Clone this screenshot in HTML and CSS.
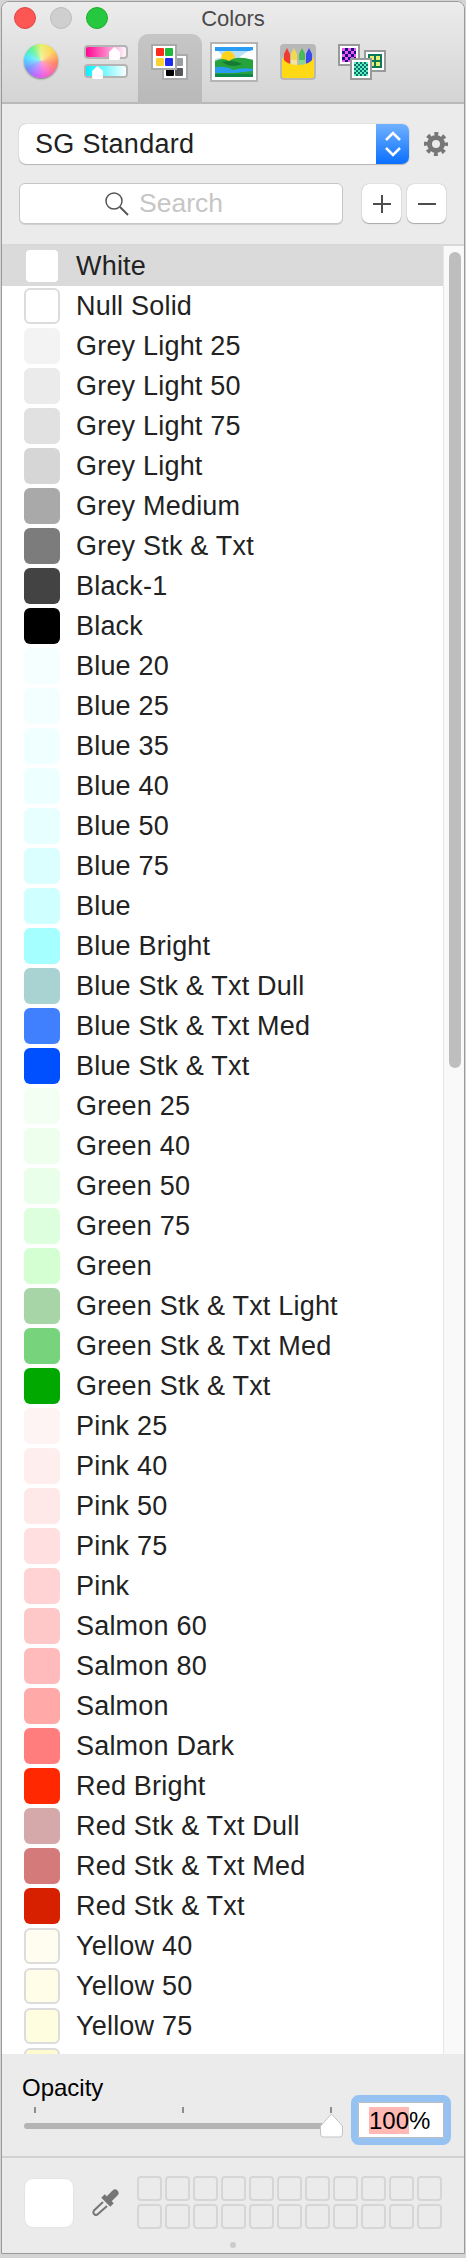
FILE: index.html
```html
<!DOCTYPE html>
<html lang="en">
    <head>
        <meta charset="UTF-8">
        <meta name="viewport" content="width=device-width, initial-scale=1.0">
        <title>Colors</title>
        <link rel="stylesheet" href="styles.css">
    </head>
    <body>
        <div class="window">
            <header class="toolbar">
                <div class="titlebar">
                    <div class="lights">
                        <span class="light red"></span>
                        <span class="light grey"></span>
                        <span class="light green"></span>
                    </div>
                    <div class="title">Colors</div>
                    <div></div>
                </div>
                <div class="tabs">
                    <div class="tab"><span class="wheel"></span></div>
                    <div class="tab">
                        <svg width="64" height="68" viewBox="74 34 64 68">
                            <defs>
                                <linearGradient id="pinkbar"><stop offset="0" stop-color="#ff0090"/><stop offset="1" stop-color="#fff"/></linearGradient>
                                <linearGradient id="cyanbar"><stop offset="0" stop-color="#00f0ff"/><stop offset="1" stop-color="#fff"/></linearGradient>
                            </defs>
                            <rect x="85" y="46" width="42" height="12" rx="3" fill="url(#pinkbar)" stroke="#b4b4b4" stroke-width="2"/>
                            <rect x="85" y="65" width="42" height="12" rx="3" fill="url(#cyanbar)" stroke="#b4b4b4" stroke-width="2"/>
                            <path d="M109 52 L114.500 47 L120 52 V58 Q120 60 118 60 H111 Q109 60 109 58 Z" fill="#fff"/>
                            <path d="M92 71 L97.500 66 L103 71 V77 Q103 79 101 79 H94 Q92 79 92 77 Z" fill="#fff"/>
                        </svg>
                    </div>
                    <div class="tab active">
                        <svg width="64" height="68" viewBox="138 34 64 68">
                            <rect x="163" y="55" width="24" height="24" fill="#fff" stroke="#aaa" stroke-width="2"/>
                            <rect x="175" y="58" width="8" height="8" rx="1" fill="#9b9ea1"/>
                            <rect x="166" y="68" width="8" height="8" rx="1" fill="#000"/>
                            <rect x="175" y="68" width="8" height="8" rx="1" fill="#55575a"/>
                            <rect x="152" y="45" width="24" height="24" fill="#fff" stroke="#aaa" stroke-width="2"/>
                            <rect x="156" y="48" width="8" height="8" rx="1" fill="#fb2a1c"/>
                            <rect x="165" y="48" width="8" height="8" rx="1" fill="#1cb93a"/>
                            <rect x="156" y="58" width="8" height="8" rx="1" fill="#fdd034"/>
                            <rect x="165" y="58" width="8" height="8" rx="1" fill="#1f2cf0"/>
                        </svg>
                    </div>
                    <div class="tab">
                        <svg width="64" height="68" viewBox="202 34 64 68">
                            <rect x="211" y="43" width="46" height="38" fill="#fff" stroke="#b4b4b4" stroke-width="2"/>
                            <rect x="215" y="47" width="38" height="30" fill="#2a9cf4"/>
                            <rect x="215" y="51" width="38" height="12" fill="#b9e0f5"/>
                            <path d="M215 51 h3 q3 3 5 6 l-8 2 Z M253 50 v9 h-15 q6 -7 15 -9 Z" fill="#fff"/>
                            <circle cx="228" cy="58" r="7" fill="#ffd21e"/>
                            <path d="M215 61 q8 -4 14 0 q8 -6 24 -1 v17 h-38 Z" fill="#27a33c"/>
                            <path d="M222 62 q12 -3 20 2 q-10 5 -20 -2 Z" fill="#157a35"/>
                            <path d="M215 67 q12 -1 18 3 q10 -3 20 -1 v2 q-10 1 -18 2 q-10 0 -20 0 Z" fill="#2a9cf4"/>
                            <rect x="215" y="74" width="38" height="3" fill="#0d8a4a"/>
                        </svg>
                    </div>
                    <div class="tab">
                        <svg width="64" height="68" viewBox="266 34 64 68">
                            <rect x="280" y="44" width="36" height="36" rx="4" fill="#b8b8b8"/>
                            <path d="M284 66 V54 L287 48 L290 54 V66 Z" fill="#ee3a30"/>
                            <path d="M291 66 V54 L294 48 L297 54 V66 Z" fill="#f5d94a"/>
                            <path d="M299 66 V54 L302 48 L305 54 V66 Z" fill="#47bb56"/>
                            <path d="M306 66 V54 L309 48 L312 54 V66 Z" fill="#3a48ee"/>
                            <rect x="291" y="60" width="6" height="11" fill="#f5e49a"/>
                            <rect x="299" y="60" width="6" height="11" fill="#86d68f"/>
                            <path d="M282 57 Q286 65 298 65 Q310 65 314 57 V76 Q314 78 312 78 H284 Q282 78 282 76 Z" fill="#ffd816"/>
                        </svg>
                    </div>
                    <div class="tab">
                        <svg width="64" height="68" viewBox="330 34 64 68">
                            <defs>
                                <pattern id="navycheck" width="6" height="6" patternUnits="userSpaceOnUse">
                                    <rect width="6" height="6" fill="#14147e"/>
                                    <rect width="3" height="3" fill="#f455f0"/>
                                    <rect x="3" y="3" width="3" height="3" fill="#f455f0"/>
                                </pattern>
                                <pattern id="tealcheck" width="4" height="4" patternUnits="userSpaceOnUse">
                                    <rect width="4" height="4" fill="#0f6f6a"/>
                                    <rect width="2" height="2" fill="#5cf0c0"/>
                                    <rect x="2" y="2" width="2" height="2" fill="#5cf0c0"/>
                                </pattern>
                            </defs>
                            <rect x="365" y="51" width="20" height="20" fill="#fff" stroke="#999" stroke-width="2"/>
                            <rect x="368" y="54" width="14" height="14" fill="#0c7a58"/>
                            <rect x="370" y="56" width="4" height="4" fill="#ecec70"/>
                            <rect x="376" y="56" width="4" height="4" fill="#ecec70"/>
                            <rect x="370" y="62" width="4" height="4" fill="#ecec70"/>
                            <rect x="376" y="62" width="4" height="4" fill="#ecec70"/>
                            <rect x="339" y="45" width="20" height="20" fill="#fff" stroke="#999" stroke-width="2"/>
                            <rect x="342" y="48" width="14" height="14" fill="url(#navycheck)"/>
                            <rect x="351" y="59" width="20" height="20" fill="#fff" stroke="#999" stroke-width="2"/>
                            <rect x="354" y="62" width="14" height="14" fill="url(#tealcheck)"/>
                        </svg>
                    </div>
                </div>
            </header>

            <section class="controls">
                <div class="control-row">
                    <div class="dropdown">
                        <span class="dropdown-label">SG Standard</span>
                        <span class="stepper">
                            <svg width="20" height="32" viewBox="0 0 20 32">
                                <path d="M3 12 L10 5 L17 12 M3 20 L10 27 L17 20" fill="none" stroke="#fff" stroke-width="2.500"/>
                            </svg>
                        </span>
                    </div>
                    <svg class="gear" width="24" height="24" viewBox="0 0 24 24">
                        <circle cx="12" cy="12" r="6.500" fill="none" stroke="#767676" stroke-width="5"/>
                        <circle cx="12" cy="12" r="10" fill="none" stroke="#767676" stroke-width="4" stroke-dasharray="3.850 4" stroke-dashoffset="1.900"/>
                    </svg>
                </div>
                <div class="control-row search-row">
                    <div class="search">
                        <svg width="24" height="24" viewBox="0 0 24 24">
                            <circle cx="9" cy="9" r="8" fill="none" stroke="#555" stroke-width="1.500"/>
                            <path d="M15 15 L23 23" stroke="#555" stroke-width="2"/>
                        </svg>
                        <span class="search-text">Search</span>
                    </div>
                    <div class="square-btn">
                        <svg width="20" height="20" viewBox="0 0 20 20"><path d="M1 10 H19 M10 1 V19" stroke="#4d4d4d" stroke-width="2"/></svg>
                    </div>
                    <div class="square-btn">
                        <svg width="20" height="20" viewBox="0 0 20 20"><path d="M1 10 H19" stroke="#4d4d4d" stroke-width="2"/></svg>
                    </div>
                </div>
            </section>

            <div class="list-wrap">
                <div class="list">
                    <div class="row selected"><span class="swatch" style="background:#fff"></span>White</div>
                    <div class="row"><span class="swatch outlined" style="background:#fff"></span>Null Solid</div>
                    <div class="row"><span class="swatch" style="background:#f3f3f3"></span>Grey Light 25</div>
                    <div class="row"><span class="swatch" style="background:#ebebeb"></span>Grey Light 50</div>
                    <div class="row"><span class="swatch" style="background:#e1e1e1"></span>Grey Light 75</div>
                    <div class="row"><span class="swatch" style="background:#d6d6d6"></span>Grey Light</div>
                    <div class="row"><span class="swatch" style="background:#a9a9a9"></span>Grey Medium</div>
                    <div class="row"><span class="swatch" style="background:#7c7c7c"></span>Grey Stk &amp; Txt</div>
                    <div class="row"><span class="swatch" style="background:#434343"></span>Black-1</div>
                    <div class="row"><span class="swatch" style="background:#000"></span>Black</div>
                    <div class="row"><span class="swatch" style="background:#f5ffff"></span>Blue 20</div>
                    <div class="row"><span class="swatch" style="background:#f3ffff"></span>Blue 25</div>
                    <div class="row"><span class="swatch" style="background:#f0ffff"></span>Blue 35</div>
                    <div class="row"><span class="swatch" style="background:#edffff"></span>Blue 40</div>
                    <div class="row"><span class="swatch" style="background:#e8ffff"></span>Blue 50</div>
                    <div class="row"><span class="swatch" style="background:#dbffff"></span>Blue 75</div>
                    <div class="row"><span class="swatch" style="background:#d0ffff"></span>Blue</div>
                    <div class="row"><span class="swatch" style="background:#a5ffff"></span>Blue Bright</div>
                    <div class="row"><span class="swatch" style="background:#a9d3d3"></span>Blue Stk &amp; Txt Dull</div>
                    <div class="row"><span class="swatch" style="background:#4080ff"></span>Blue Stk &amp; Txt Med</div>
                    <div class="row"><span class="swatch" style="background:#0050ff"></span>Blue Stk &amp; Txt</div>
                    <div class="row"><span class="swatch" style="background:#f4fff4"></span>Green 25</div>
                    <div class="row"><span class="swatch" style="background:#eeffee"></span>Green 40</div>
                    <div class="row"><span class="swatch" style="background:#e9ffe9"></span>Green 50</div>
                    <div class="row"><span class="swatch" style="background:#deffde"></span>Green 75</div>
                    <div class="row"><span class="swatch" style="background:#d3ffd3"></span>Green</div>
                    <div class="row"><span class="swatch" style="background:#a8d5a8"></span>Green Stk &amp; Txt Light</div>
                    <div class="row"><span class="swatch" style="background:#77d47d"></span>Green Stk &amp; Txt Med</div>
                    <div class="row"><span class="swatch" style="background:#00a800"></span>Green Stk &amp; Txt</div>
                    <div class="row"><span class="swatch" style="background:#fff4f4"></span>Pink 25</div>
                    <div class="row"><span class="swatch" style="background:#ffeeee"></span>Pink 40</div>
                    <div class="row"><span class="swatch" style="background:#ffe8e8"></span>Pink 50</div>
                    <div class="row"><span class="swatch" style="background:#ffdfdf"></span>Pink 75</div>
                    <div class="row"><span class="swatch" style="background:#ffd3d3"></span>Pink</div>
                    <div class="row"><span class="swatch" style="background:#ffc8c8"></span>Salmon 60</div>
                    <div class="row"><span class="swatch" style="background:#ffbbbb"></span>Salmon 80</div>
                    <div class="row"><span class="swatch" style="background:#ffa9a9"></span>Salmon</div>
                    <div class="row"><span class="swatch" style="background:#ff7d7d"></span>Salmon Dark</div>
                    <div class="row"><span class="swatch" style="background:#ff2800"></span>Red Bright</div>
                    <div class="row"><span class="swatch" style="background:#d5a9a9"></span>Red Stk &amp; Txt Dull</div>
                    <div class="row"><span class="swatch" style="background:#d47a7a"></span>Red Stk &amp; Txt Med</div>
                    <div class="row"><span class="swatch" style="background:#d62000"></span>Red Stk &amp; Txt</div>
                    <div class="row"><span class="swatch outlined" style="background:#fffdef"></span>Yellow 40</div>
                    <div class="row"><span class="swatch outlined" style="background:#fffde8"></span>Yellow 50</div>
                    <div class="row"><span class="swatch outlined" style="background:#fffde0"></span>Yellow 75</div>
                    <div class="row"><span class="swatch outlined" style="background:#fffbd0"></span></div>
                </div>
                <div class="scrollbar"><div class="thumb"></div></div>
            </div>

            <section class="opacity">
                <div class="opacity-left">
                    <div class="opacity-label">Opacity</div>
                    <div class="ticks"><span></span><span></span><span></span></div>
                    <div class="slider">
                        <div class="track"></div>
                        <svg class="knob" width="23" height="25" viewBox="0 0 23 25">
                            <path d="M.5 13 L11.500 1 L22.500 13 V21 Q22.500 24 19.500 24 H3.500 Q.5 24 .5 21 Z" fill="#fff" stroke="#c4c4c4"/>
                        </svg>
                    </div>
                </div>
                <div class="percent"><span class="percent-selected">100</span>%</div>
            </section>

            <footer class="favorites">
                <div class="favorites-row">
                    <div class="current"></div>
                    <svg class="dropper" width="28" height="28" viewBox="0 0 28 28">
                        <path d="M23 5 L18 10" stroke="#767676" stroke-width="7" stroke-linecap="round"/>
                        <path d="M11 8 L20 17" stroke="#767676" stroke-width="5"/>
                        <path d="M11 14 L2 22.500 Q0.500 25 2.500 26.500 Q4.500 27.500 6 26 L15 18" fill="none" stroke="#767676" stroke-width="2"/>
                    </svg>
                    <div class="wells">
                        <span></span><span></span><span></span><span></span><span></span><span></span><span></span><span></span><span></span><span></span><span></span>
                        <span></span><span></span><span></span><span></span><span></span><span></span><span></span><span></span><span></span><span></span><span></span>
                    </div>
                </div>
                <div class="grip"></div>
            </footer>
        </div>
    </body>
</html>
```

FILE: styles.css
```css
body {
    margin: 0;
    background-color: #d4d4d4;
    font-family: "Liberation Sans", Arial, sans-serif;
    color: #222;
}

.window {
    width: 462px;
    margin: 1px 1px 2px 1px;
    border: 1px solid #9a9a9a;
    border-radius: 8px 8px 0 0;
    background-color: #ebebeb;
    overflow: hidden;
}

/* title bar and tabs */
.toolbar {
    height: 100px;
    background: linear-gradient(#ececec, #d4d4d4);
    border-bottom: 2px solid #b9b9b9;
}

.titlebar {
    display: grid;
    grid-template-columns: 1fr auto 1fr;
    height: 32px;
    align-items: start;
}

.lights {
    display: flex;
    gap: 14px;
    padding: 5px 0 0 12px;
}

.light {
    width: 22px;
    height: 22px;
    border-radius: 50%;
    box-sizing: border-box;
}

.red {
    background-color: #fc5753;
    border: 1px solid #df4744;
}

.grey {
    background-color: #cfcfcf;
    border: 1px solid #bcbcbc;
}

.green {
    background-color: #26c83f;
    border: 1px solid #1dad2b;
}

.title {
    font-size: 22px;
    line-height: 26px;
    padding-top: 4px;
    color: #4a4a4a;
}

.tabs {
    display: flex;
    padding-left: 8px;
    height: 68px;
}

.tab {
    width: 64px;
    height: 68px;
    display: flex;
    align-items: center;
    justify-content: center;
}

.tab svg {
    display: block;
}

.active {
    background: linear-gradient(#c6c6c6, #b9b9b9);
    border-radius: 10px 10px 0 0;
}

.wheel {
    width: 34px;
    height: 34px;
    margin: 0 2px 14px 0;
    border-radius: 50%;
    background:
        radial-gradient(circle, rgba(255, 255, 255, 0.45), rgba(255, 255, 255, 0) 70%),
        conic-gradient(#e9ef6c, #ffd24f 50deg, #ff7a5c 100deg, #ff5cc0 150deg, #c85cff 195deg, #6a8cff 240deg, #45e4ff 285deg, #5cf58c 325deg, #e9ef6c);
    box-shadow: 0 1px 2px rgba(0, 0, 0, 0.45);
}

/* picker select and search */
.controls {
    padding: 20px 0 20px 17px;
    border-bottom: 2px solid #d8d8d8;
}

.control-row {
    display: flex;
    align-items: center;
}

.search-row {
    margin-top: 19px;
}

.dropdown {
    width: 390px;
    height: 40px;
    display: flex;
    justify-content: space-between;
    background-color: white;
    border-radius: 7px;
    box-shadow: 0 0 1px #8a8a8a, 0 1px 1px #bbb;
    overflow: hidden;
}

.dropdown-label {
    font-size: 27px;
    line-height: 40px;
    padding-left: 16px;
    letter-spacing: 0.3px;
}

.stepper {
    width: 33px;
    display: flex;
    align-items: center;
    justify-content: center;
    background: linear-gradient(#6fb1ff, #0a6fff);
}

.gear {
    margin-left: 15px;
}

.search {
    width: 324px;
    height: 41px;
    box-sizing: border-box;
    display: flex;
    align-items: center;
    gap: 10px;
    padding-left: 85px;
    background-color: white;
    border: 1px solid #c6c6c6;
    border-radius: 6px;
    box-shadow: 0 1px 0 #d0d0d0;
}

.search-text {
    font-size: 26.500px;
    color: #c6c6c6;
}

.square-btn {
    width: 39px;
    height: 39px;
    margin-left: 6px;
    display: flex;
    align-items: center;
    justify-content: center;
    background-color: white;
    border-radius: 7px;
    box-shadow: 0 0 1px #999, 0 1px 1px #aaa;
}

.search + .square-btn {
    margin-left: 19px;
}

/* colour list */
.list-wrap {
    display: flex;
    height: 1808px;
}

.list {
    flex: 1;
    background-color: white;
    overflow: hidden;
}

.row {
    display: flex;
    align-items: center;
    gap: 16px;
    height: 40px;
    padding-left: 22px;
    font-size: 27px;
    letter-spacing: 0.2px;
}

.selected {
    background-color: #dadada;
}

.swatch {
    width: 36px;
    height: 36px;
    border-radius: 6px;
}

.outlined {
    box-sizing: border-box;
    border: 2px solid #dcdcdc;
}

.selected .swatch {
    box-sizing: border-box;
    border: 2px solid #dadada;
}

.scrollbar {
    width: 21px;
    box-sizing: border-box;
    padding: 6px 4px 0 5px;
    background-color: #f9f9f9;
    border-left: 1px solid #e6e6e6;
}

.thumb {
    width: 12px;
    height: 816px;
    border-radius: 6px;
    background-color: #bebebe;
}

/* opacity slider */
.opacity {
    display: flex;
    height: 104px;
    box-sizing: border-box;
    padding: 20px 0 0 20px;
    border-bottom: 2px solid #d2d2d2;
}

.opacity-left {
    width: 321px;
}

.opacity-label {
    font-size: 24px;
    line-height: 28px;
    color: black;
}

.ticks {
    display: flex;
    justify-content: space-between;
    width: 298px;
    margin: 5px 0 0 12px;
}

.ticks span {
    width: 2px;
    height: 6px;
    background-color: #8d8d8d;
}

.slider {
    display: flex;
    align-items: center;
    height: 25px;
    padding-left: 2px;
}

.track {
    width: 301px;
    height: 6px;
    border-radius: 3px;
    background-color: #b4b4b4;
}

.knob {
    margin-left: -5px;
}

.percent {
    width: 86px;
    height: 36px;
    margin: 28px 0 0 15px;
    box-sizing: border-box;
    padding: 4px 0 0 10px;
    background-color: white;
    border: 1px solid #bdbdbd;
    outline: 7px solid #96c2f2;
    border-radius: 1px;
    font-size: 24px;
    line-height: 28px;
    color: black;
}

.percent-selected {
    background-color: #ffb8b3;
}

/* swatch wells at the bottom */
.favorites {
    height: 95px;
    box-sizing: border-box;
    padding-top: 18px;
}

.favorites-row {
    display: flex;
    align-items: flex-start;
    padding-left: 22px;
}

.current {
    width: 50px;
    height: 50px;
    margin-top: 2px;
    box-sizing: border-box;
    background-color: white;
    border: 1px solid #e4e4e4;
    border-radius: 9px;
}

.dropper {
    margin: 12px 0 0 18px;
}

.wells {
    display: grid;
    grid-template-columns: repeat(11, 25px);
    grid-auto-rows: 25px;
    gap: 3px;
    margin-left: 17px;
}

.wells span {
    box-sizing: border-box;
    border: 2px solid #d6d6d6;
    border-radius: 4px;
}

.grip {
    width: 6px;
    height: 6px;
    margin: 13px auto 0;
    border-radius: 50%;
    background-color: #cbcbcb;
}
```
